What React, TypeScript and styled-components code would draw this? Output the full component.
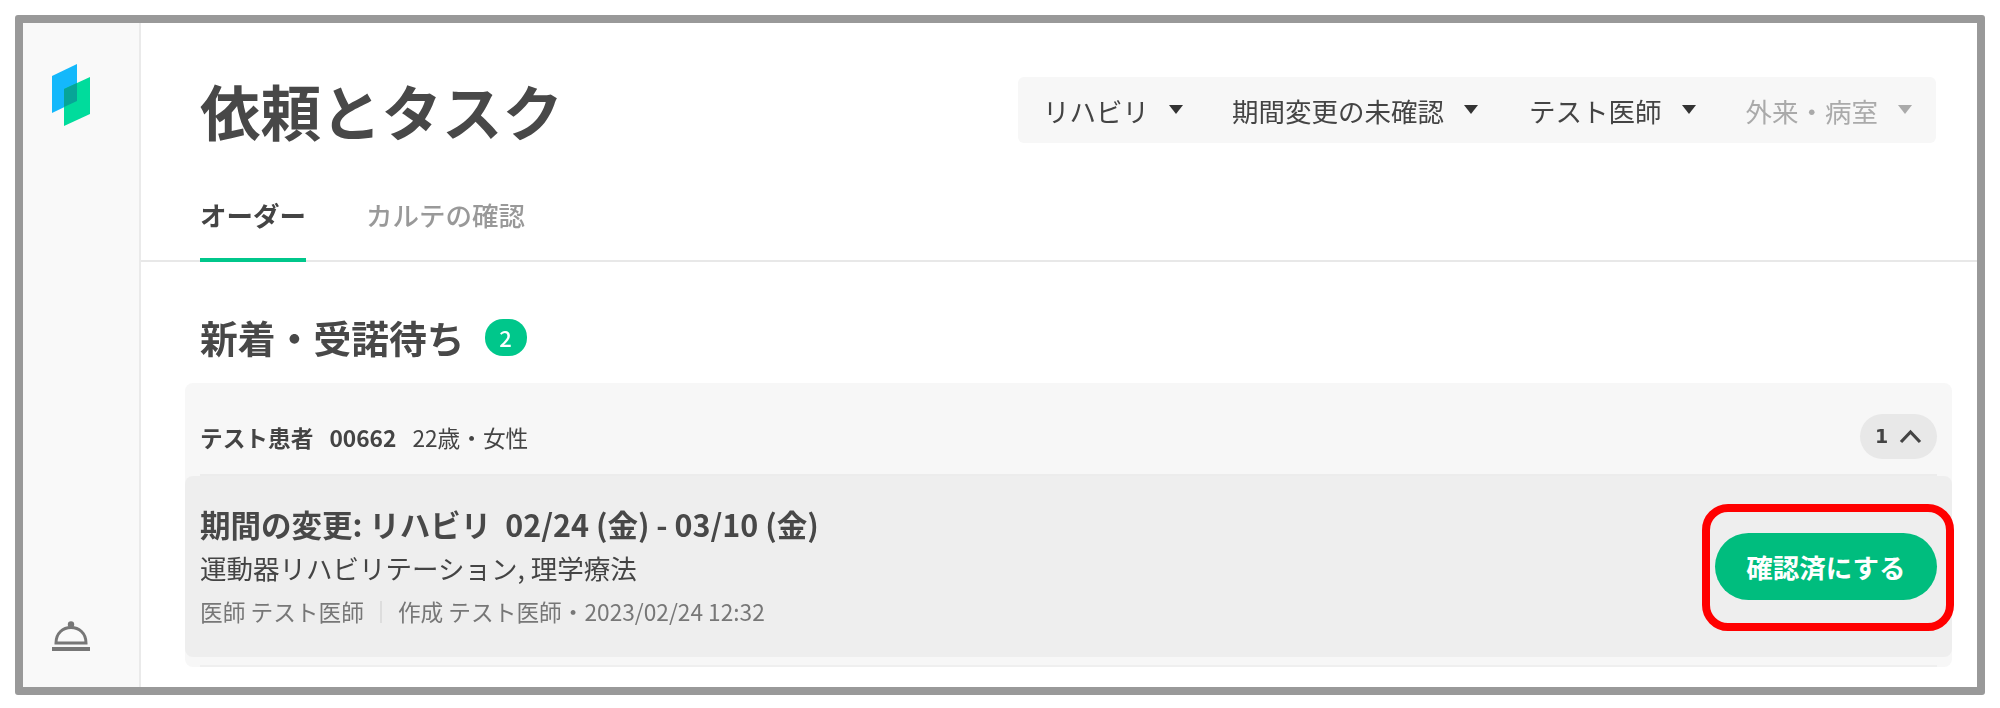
import React from "react";
import styled, { createGlobalStyle } from "styled-components";

const Global = createGlobalStyle`
  html, body { margin: 0; padding: 0; background: #fff; }
  body { font-family: "Noto Sans CJK JP", "Noto Sans", sans-serif; color: #444; }
`;

const Frame = styled.div`
  box-sizing: border-box;
  margin: 15px;
  width: 1970px;
  height: 680px;
  border: 8px solid #999;
  border-radius: 3px;
  display: flex;
  overflow: hidden;
  filter: blur(0.6px);
`;

const Sidebar = styled.aside`
  box-sizing: border-box;
  width: 118px;
  flex: none;
  background: #f9f9f9;
  border-right: 2px solid #eaeaea;
  display: flex;
  flex-direction: column;
  justify-content: space-between;
  padding: 39px 0 35px 28px;
`;

const Main = styled.main`
  flex: 1;
  min-width: 0;
  display: flex;
  flex-direction: column;
`;

const Header = styled.header`
  display: flex;
  justify-content: space-between;
  align-items: flex-start;
  padding: 54px 41px 0 59px;
`;

const Title = styled.h1`
  margin: -3px 0 0;
  font-size: 60.5px;
  line-height: 72px;
  font-weight: 700;
  color: #484848;
  white-space: nowrap;
`;

const FilterBar = styled.div`
  width: 918px;
  height: 66px;
  box-sizing: border-box;
  background: #f7f7f7;
  border-radius: 6px;
  display: flex;
  align-items: center;
  padding: 2px 0 0 25px;
`;

const Filter = styled.div<{ $gap: number; $muted?: boolean }>`
  display: flex;
  align-items: center;
  font-size: 26.5px;
  line-height: 36px;
  color: ${(p) => (p.$muted ? "#aaa" : "#444")};
  margin-right: ${(p) => p.$gap}px;
  white-space: nowrap;
`;

const Caret = styled.span<{ $muted?: boolean }>`
  width: 0;
  height: 0;
  margin-left: 20px;
  margin-bottom: 4px;
  border-left: 7.5px solid transparent;
  border-right: 7.5px solid transparent;
  border-top: 9px solid ${(p) => (p.$muted ? "#aaa" : "#333")};
`;

const TabBar = styled.nav`
  display: flex;
  gap: 60px;
  height: 71px;
  margin-top: 43px;
  padding-left: 59px;
  border-bottom: 2px solid #e8e8e8;
`;

const Tab = styled.div<{ $active?: boolean }>`
  box-sizing: border-box;
  height: 73px;
  padding-top: 6px;
  font-size: 26.5px;
  line-height: 40px;
  white-space: nowrap;
  font-weight: ${(p) => (p.$active ? 700 : 500)};
  color: ${(p) => (p.$active ? "#444" : "#999")};
  border-bottom: 4px solid ${(p) => (p.$active ? "#00c78b" : "transparent")};
`;

const Section = styled.section`
  padding: 55px 25px 0 44px;
`;

const SectionHead = styled.div`
  display: flex;
  align-items: center;
  gap: 20px;
  height: 40px;
  padding-left: 15px;
  margin-bottom: 26px;
`;

const SectionTitle = styled.h2`
  margin: 0;
  font-size: 37.8px;
  line-height: 40px;
  font-weight: 700;
  color: #484848;
  white-space: nowrap;
`;

const CountBadge = styled.span`
  width: 42px;
  height: 37px;
  border-radius: 18px;
  background: #00c78b;
  color: #fff;
  font-size: 22px;
  font-weight: 500;
  display: flex;
  align-items: center;
  justify-content: center;
`;

const Card = styled.div`
  background: #f7f7f7;
  border-radius: 8px;
  height: 284px;
`;

const PatientRow = styled.div`
  box-sizing: border-box;
  height: 93px;
  margin: 0 15px;
  padding-top: 18px;
  border-bottom: 2px solid #ececec;
  display: flex;
  align-items: center;
  font-size: 22.7px;
  color: #444;
  white-space: nowrap;
`;

const PatientName = styled.span`
  font-weight: 700;
  margin-right: 16px;
`;

const Toggle = styled.div`
  margin-left: auto;
  width: 77px;
  height: 45px;
  border-radius: 23px;
  background: #e8e8e8;
  display: flex;
  align-items: center;
  justify-content: center;
  gap: 11px;
  font-family: "DejaVu Sans", sans-serif;
  font-weight: 700;
  font-size: 19px;
  margin-top: -3px;
`;

const OrderRow = styled.div`
  box-sizing: border-box;
  height: 181px;
  background: #eee;
  border-radius: 8px;
  padding: 0 15px;
  display: flex;
  align-items: center;
  justify-content: space-between;
`;

const CardFoot = styled.div`
  box-sizing: border-box;
  height: 10px;
  margin: 0 15px;
  border-bottom: 2px solid #efefef;
`;

const OrderText = styled.div`
  display: flex;
  flex-direction: column;
  white-space: nowrap;
  padding-top: 2px;
`;

const OrderTitle = styled.div`
  font-size: 30.5px;
  line-height: 44px;
  font-weight: 700;
  color: #484848;
  white-space: pre;
`;

const OrderSub = styled.div`
  font-size: 26.5px;
  line-height: 43px;
  color: #444;
`;

const OrderMeta = styled.div`
  font-size: 22.7px;
  line-height: 42px;
  margin-top: 2px;
  color: #777;
  display: flex;
  align-items: center;
`;

const MetaDivider = styled.span`
  width: 2px;
  height: 22px;
  background: #ddd;
  margin: 0 16px;
`;

const ActionWrap = styled.div`
  position: relative;
`;

const ConfirmButton = styled.button`
  display: block;
  width: 222px;
  height: 67px;
  border: 0;
  border-radius: 34px;
  background: #00bd7e;
  color: #fff;
  font-family: inherit;
  font-size: 26.5px;
  font-weight: 700;
  padding: 0;
`;

const Highlight = styled.div`
  position: absolute;
  top: -29px;
  left: -13px;
  right: -17px;
  bottom: -31px;
  border: 8px solid #f00;
  border-radius: 26px;
  pointer-events: none;
`;

const Logo = () => (
  <svg width="40" height="64" viewBox="0 0 40 64" fill="none">
    <path d="M1 14 L26 2 L26 39 L1 51 Z" fill="#14b8fb" />
    <path d="M13 27 L39 15 L39 52 L13 64 Z" fill="#00dc9c" />
    <path d="M13 27 L26 21 L26 39 L13 45 Z" fill="#07a597" />
  </svg>
);

const Bell = () => (
  <svg width="40" height="32" viewBox="0 0 40 32" fill="none">
    <circle cx="20" cy="4.5" r="3.2" fill="#777" />
    <path d="M5 23 C5 13 12 7.5 20 7.5 C28 7.5 35 13 35 23 Z" fill="none" stroke="#777" strokeWidth="3" />
    <rect x="1" y="27" width="38" height="4" fill="#777" />
  </svg>
);

const Chevron = () => (
  <svg width="23" height="15" viewBox="0 0 23 15" fill="none">
    <path d="M2 13 L11.5 3 L21 13" stroke="#444" strokeWidth="3.2" />
  </svg>
);

const filters = [
  { label: "リハビリ", gap: 49 },
  { label: "期間変更の未確認", gap: 51 },
  { label: "テスト医師", gap: 50 },
  { label: "外来・病室", gap: 0, muted: true },
];

export default function App() {
  return (
    <>
      <Global />
      <Frame>
        <Sidebar>
          <Logo />
          <Bell />
        </Sidebar>
        <Main>
          <Header>
            <Title>依頼とタスク</Title>
            <FilterBar>
              {filters.map((f) => (
                <Filter key={f.label} $gap={f.gap} $muted={f.muted}>
                  {f.label}
                  <Caret $muted={f.muted} />
                </Filter>
              ))}
            </FilterBar>
          </Header>
          <TabBar>
            <Tab $active>オーダー</Tab>
            <Tab>カルテの確認</Tab>
          </TabBar>
          <Section>
            <SectionHead>
              <SectionTitle>新着・受諾待ち</SectionTitle>
              <CountBadge>2</CountBadge>
            </SectionHead>
            <Card>
              <PatientRow>
                <PatientName>テスト患者</PatientName>
                <PatientName>00662</PatientName>
                <span>22歳・女性</span>
                <Toggle>
                  1
                  <Chevron />
                </Toggle>
              </PatientRow>
              <OrderRow>
                <OrderText>
                  <OrderTitle>期間の変更: リハビリ  02/24 (金) - 03/10 (金)</OrderTitle>
                  <OrderSub>運動器リハビリテーション, 理学療法</OrderSub>
                  <OrderMeta>
                    医師 テスト医師
                    <MetaDivider />
                    作成 テスト医師・2023/02/24 12:32
                  </OrderMeta>
                </OrderText>
                <ActionWrap>
                  <ConfirmButton>確認済にする</ConfirmButton>
                  <Highlight />
                </ActionWrap>
              </OrderRow>
              <CardFoot />
            </Card>
          </Section>
        </Main>
      </Frame>
    </>
  );
}
